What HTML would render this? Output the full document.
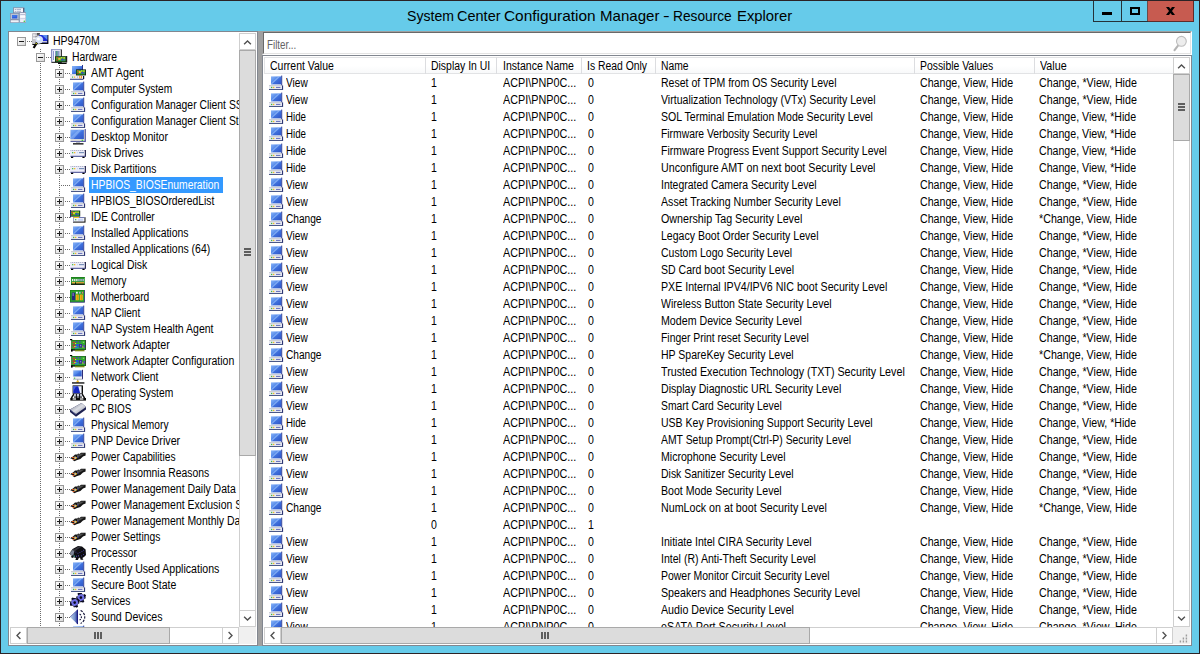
<!DOCTYPE html>
<html><head><meta charset="utf-8"><title>Resource Explorer</title>
<style>
*{box-sizing:border-box;margin:0;padding:0}
html,body{width:1200px;height:654px;overflow:hidden}
body{font-family:"Liberation Sans",sans-serif;font-size:12px;color:#000;background:#66cbea;position:relative}
.a{position:absolute}
#win{position:absolute;left:0;top:0;width:1200px;height:654px;background:#66cbea;overflow:hidden}
#title{position:absolute;left:0;top:6px;width:1200px;height:20px;font-size:15px;color:#000;line-height:20px;white-space:nowrap}
.tw{position:absolute;top:0;transform-origin:0 50%;display:block}
#tree{position:absolute;left:8px;top:31px;width:250px;height:615px;background:#fff;border:1px solid #828790;overflow:hidden}
#treein{position:absolute;left:1px;top:1px;width:229px;height:594px;overflow:hidden;background:#fff}
.bx{position:absolute;width:9px;height:9px;border:1px solid #989898;background:linear-gradient(135deg,#fcfcfc 10%,#d8d8d8)}
.bx:before{content:"";position:absolute;left:1px;top:3px;width:5px;height:1px;background:#1a1a1a}
.bx.p:after{content:"";position:absolute;left:3px;top:1px;width:1px;height:5px;background:#1a1a1a}
.hd{position:absolute;height:1px;background-image:linear-gradient(90deg,#6a6a6a 50%,transparent 50%);background-size:2px 1px}
.vd{position:absolute;width:1px;background-image:linear-gradient(#6a6a6a 50%,transparent 50%);background-size:1px 2px}
.ic{position:absolute;display:block}
.tx{position:absolute;padding:0 2px;height:16px;line-height:17px;white-space:nowrap}
.tx.sel{background:#3399ff;color:#fff}
.t{display:inline-block;transform-origin:0 50%;white-space:nowrap}
#split{position:absolute;left:258px;top:31px;width:4px;height:615px;background:#a0a0a0}
#filter{position:absolute;left:262px;top:31px;width:930px;height:24px;background:#fff;border:1px solid #a0a0a0;border-right-color:#fff;border-bottom-color:#fff}
#filter:before{content:"";position:absolute;left:0;top:0;right:0;bottom:0;border:1px solid #696969;border-right-color:#e3e3e3;border-bottom-color:#e3e3e3}
#list{position:absolute;left:262px;top:55px;width:930px;height:591px;background:#fff;border:1px solid #828790;overflow:hidden}
#listin{position:absolute;left:1px;top:1px;width:909px;height:570px;overflow:hidden}
#hdr{height:17px;position:relative;border:1px solid #e2e3e5;border-right:none;background:linear-gradient(#fff,#fff 50%,#f8f9fa)}
.h{position:absolute;top:-1px;height:17px;line-height:18px;padding-left:5px;border-left:1px solid #dcdde0;white-space:nowrap}
.r{height:17px;position:relative}
.c{position:absolute;top:0;height:17px;line-height:19px;white-space:nowrap;overflow:hidden}
.c1{left:-1px;width:161px}.c2{left:160px;width:71px}.c3{left:231px;width:85px}.c4{left:316px;width:74px}.c5{left:390px;width:259px}.c6{left:649px;width:120px}.c7{left:769px;width:140px}
.h.c1{border-left:none;padding-left:6px}.h.c3{padding-left:6px}
.c.c1{left:4px;padding-left:18px}
.c.c1 .ic{position:absolute;left:0;top:.5px}
.c.c2{padding-left:7px}.c.c3{padding-left:8px}.c.c4{padding-left:8px}.c.c5{padding-left:6.5px}.c.c6{padding-left:7px}.c.c7{padding-left:6px}
.sb{position:absolute;background:#fff;border:1px solid #cfcfcf}
.sbtn{position:absolute;width:17px;height:17px;background:#fff;border:1px solid #cfcfcf}
.sbtn svg,.thumb svg{display:block}
.thumb{position:absolute;background:#dcdcdc;border:1px solid #a9a9a9}
.gb{position:absolute;background:#5e5e5e}
</style></head><body>
<svg width="0" height="0" style="position:absolute">
<defs>
<linearGradient id="gmon" x1="0" y1="0" x2="1" y2="1"><stop offset="0" stop-color="#6fa0f0"/><stop offset=".5" stop-color="#3f74e0"/><stop offset="1" stop-color="#2a55c0"/></linearGradient>
<g id="pc">
<rect x="13.200" y=".6" width="1" height="9.800" fill="#27348b"/>
<rect x="3" y="1.400" width="10.300" height="8" fill="url(#gscr)"/>
<path d="M3 8.400L10.500 1.400h1.600L3.600 9.400H3z" fill="#b8d4fc" opacity=".5"/>
<rect x="1" y="10" width="13" height=".8" fill="#a0a4b0"/><path d="M1.500 10.400h12" stroke="#e8e8f0" stroke-width=".8" stroke-dasharray="1 1"/>
<rect x="1" y="10.800" width="13.400" height="3.400" fill="#e6e8f0"/>
<rect x="3" y="11.800" width="1.300" height="1.300" fill="#48b848"/><rect x="5" y="11.800" width="1.300" height="1.300" fill="#f4b820"/>
<rect x="8" y="11.900" width="4.400" height="1.100" fill="#7078c0"/>
<rect x="14" y="10.400" width="1.100" height="4.600" fill="#2c3474"/><rect x="1" y="14" width="13.600" height="1" fill="#4a5888"/>
</g>
<g id="i-pc"><use href="#pc"/></g>
<linearGradient id="gscr" x1="0" y1="0" x2="1" y2="1"><stop offset="0" stop-color="#8ab4f6"/><stop offset=".45" stop-color="#4f86ea"/><stop offset=".55" stop-color="#3e6fdc"/><stop offset="1" stop-color="#2f55c4"/></linearGradient>
<linearGradient id="gchip" x1="0" y1="0" x2="1" y2="1"><stop offset="0" stop-color="#6c7088"/><stop offset=".5" stop-color="#dcdee4"/><stop offset="1" stop-color="#888ca0"/></linearGradient>
<linearGradient id="gspk" x1="0" y1="0" x2="1" y2="0"><stop offset="0" stop-color="#c4d6e8"/><stop offset=".55" stop-color="#7c98d0"/><stop offset="1" stop-color="#2c3698"/></linearGradient>
<g id="pcb"><!-- 10x6 pcb -->
<rect x="0" y="0" width="10" height="6" fill="#0c1a0c"/><rect x=".6" y=".6" width="8.600" height="4.600" fill="#2fae2f"/>
<rect x="1.200" y="1" width="1.600" height="1.200" fill="#e83030"/><rect x="1.200" y="3.400" width="1.600" height="1.200" fill="#b82020"/>
<rect x="2.800" y="1.600" width="2" height="2" fill="#f4c030"/><rect x="5" y="1" width="1.400" height="1.200" fill="#f4d040"/>
<rect x="5.400" y="2.600" width="1.600" height="1.800" fill="#3a3ad0"/><rect x="7.200" y="1" width="1.400" height="1.400" fill="#e8c838"/><rect x="7.400" y="3" width="1.200" height="1.400" fill="#4848c8"/>
</g>
<g id="i-amt">
<rect x="12" y="0" width="1" height="10" fill="#27348b"/><rect x="2" y="1" width="10" height="8" fill="url(#gscr)"/>
<rect x="0" y="9.600" width="13" height=".8" fill="#a0a4b0"/><rect x="0" y="10.400" width="13.500" height="3.600" fill="#f0f1f6"/>
<rect x="2" y="11.500" width="1.200" height="1.200" fill="#48b848"/><rect x="4" y="11.500" width="1.200" height="1.200" fill="#f4b820"/><rect x="7" y="11.500" width="1" height="1.200" fill="#b0b4c8"/>
<rect x="9" y="10.800" width="3" height="2.600" fill="#f09020"/><rect x="9.600" y="11.200" width="1.400" height="1.600" fill="#fff4d0"/>
<rect x="13" y="11" width="1.200" height="3" fill="#101030"/><rect x="0" y="13.800" width="13.500" height="1" fill="#303a80"/>
<use href="#pcb" x="6" y="4.400"/>
</g>
<g id="i-mon">
<rect x=".5" y=".6" width="14.400" height="11.800" fill="#ece8dc"/><rect x="14.700" y="0" width="1" height="12.600" fill="#2a3088"/>
<rect x=".5" y=".8" width="13.400" height="9.300" fill="url(#gscr)"/><path d="M.5 8.500L8.500 .8h3L3.500 10.100H.5z" fill="#a8c8fa" opacity=".45"/>
<rect x=".5" y="11.900" width="15.200" height=".9" fill="#383e90"/><rect x="11.600" y="10.700" width="1.600" height="1.200" fill="#30d030"/>
<rect x="6" y="12.900" width="4" height="1.200" fill="#b8bcc8"/><rect x="3" y="14.200" width="10.500" height="1.300" fill="#0a0a0a"/>
</g>
<g id="i-disk">
<rect x="0" y="5" width="15.800" height="6.800" fill="#eeeefa"/><rect x=".5" y="5" width="15" height=".9" fill="#a8acc4"/>
<path d="M1 5.450h14" stroke="#e4e4f0" stroke-width=".9" stroke-dasharray="1 1"/>
<rect x="2" y="7" width="1.300" height="1.300" fill="#50c050"/><rect x="4" y="7" width="1.300" height="1.300" fill="#f8b828"/><rect x="7" y="7" width="1" height="1.200" fill="#c8d8f0"/>
<rect x="9" y="7" width="5" height="1.200" fill="#7890b8"/><rect x="14.800" y="5" width="1.100" height="6.800" fill="#181840"/>
<rect x=".5" y="10.800" width="15" height="1" fill="#404890"/><rect x="1" y="11.800" width="2.200" height="1.200" fill="#000"/><rect x="12.400" y="11.800" width="2.200" height="1.200" fill="#000"/>
</g>
<g id="i-ide">
<use href="#pcb" x=".2" y="1.600"/><rect x="0" y="1" width="1" height="7.500" fill="#202878"/>
<rect x="3" y="8.200" width="12.500" height="5.400" fill="#0a0a0a"/><rect x="3" y="8.200" width="11.500" height="4.400" fill="#eef0fa"/>
<rect x="3" y="8" width="6" height="1" fill="#f8c820"/><rect x="9" y="8" width="5.500" height="1" fill="#7078b0"/><rect x="3" y="8.200" width=".8" height="4.400" fill="#9098b8"/>
<rect x="5" y="10" width="1.300" height="1.300" fill="#58c058"/><rect x="8" y="9.800" width="5" height="2" fill="#c8d4f4"/>
</g>
<g id="i-mem">
<rect x="1" y="4" width="13.800" height="7.700" fill="#2c9a2c"/><rect x="1" y="4" width="13.800" height=".8" fill="#1c7a1c"/>
<g fill="#f0ecfa"><rect x="2" y="6" width="1.300" height="2.200"/><rect x="4.100" y="6" width="1.300" height="2.200"/><rect x="6.200" y="6" width="1.300" height="2.200"/></g>
<g fill="#b8b0f0"><rect x="8.300" y="6" width="1.300" height="2.200"/><rect x="10.400" y="6" width="1.300" height="2.200"/><rect x="12.500" y="6" width="1.300" height="2.200"/></g>
<rect x="2" y="9" width="3" height="1.600" fill="#f0b040"/><rect x="6" y="9" width="8" height="1.600" fill="#d8a038"/>
<rect x="1" y="10.700" width="13.800" height="1.100" fill="#050505"/><rect x="5" y="9.800" width="1" height="1" fill="#050505"/>
</g>
<g id="i-mobo">
<rect x="0" y="1" width="14.800" height="12.600" fill="#182060"/><rect x="0" y="1" width="14" height="11.800" fill="#2ea62e"/>
<rect x="0" y="1" width="14" height=".7" fill="#1a7a1a"/><rect x="0" y="1" width=".7" height="11.800" fill="#1a7a1a"/>
<rect x="1.800" y="3.600" width="3.400" height="7.600" fill="#28287c"/><rect x="2.400" y="4" width="1.600" height="3" fill="#6868b0"/>
<rect x="5.800" y="5.600" width="3" height="5.600" fill="#f4b418"/><rect x="6.800" y="5.600" width="1" height="5.600" fill="#d89808"/>
<rect x="9.800" y="5.600" width="3" height="5.600" fill="#f4b418"/><rect x="10.800" y="5.600" width="1" height="5.600" fill="#d89808"/>
<rect x="6" y="2.800" width="1.800" height="1.800" fill="#f4f4ff"/><rect x="9" y="2.800" width="1.600" height="1.800" fill="#b0a8e8"/><rect x="12" y="2.800" width="1" height="1.800" fill="#f86878"/>
</g>
<g id="i-nic">
<rect x="1.300" y="3" width="14.600" height="10" fill="#143a14"/><rect x="1.600" y="3.400" width="13.400" height="9" fill="#30aa30"/>
<rect x="0" y="2" width="2.200" height="1.200" fill="#000"/><rect x="1" y="12.400" width="1.600" height="2.200" fill="#000"/><rect x="1" y="12.600" width="4" height="1" fill="#000"/>
<rect x="2.600" y="4.800" width="2.400" height="1.400" fill="#d83030"/><rect x="2.600" y="7.400" width="2.400" height="1.600" fill="#c02838"/><rect x="2.600" y="10" width="2.400" height="1" fill="#d84040"/>
<rect x="5" y="6" width="1.200" height="1" fill="#f4d030"/><rect x="4" y="9" width="3" height=".8" fill="#e8d040"/>
<rect x="6" y="4" width="1.600" height="1.600" fill="#5040b0"/><rect x="9" y="4" width="1.600" height="1.600" fill="#5040b0"/>
<rect x="5.800" y="7" width="2.800" height="2.600" fill="#2858e0"/><rect x="5" y="10.200" width="3.600" height="1.200" fill="#2878e8"/>
<rect x="9" y="7" width="3.200" height="3.600" fill="#3c2c98"/><rect x="10" y="8" width="1.200" height="1.400" fill="#7890c8"/>
<rect x="12.600" y="9" width=".9" height="2" fill="#f0d040"/><rect x="13.400" y="8" width="1.600" height="2.600" fill="#5848b0"/><rect x="12.800" y="4.600" width="1.400" height="1.400" fill="#88d060"/>
<rect x="5" y="13" width="9.500" height="1.300" fill="#7a8a18"/>
</g>
<g id="i-netc">
<rect x="2.800" y="1" width="10" height="7" fill="#e8e8f0"/><rect x="3.300" y="1.400" width="8.400" height="6" fill="url(#gscr)"/><rect x="12" y=".8" width="1" height="9.400" fill="#303078"/>
<rect x="3" y="8" width="9" height="2.200" fill="#f0f0f4"/><rect x="3" y="9.800" width="9.600" height=".7" fill="#9098a8"/><rect x="4" y="8.600" width="1.200" height="1.100" fill="#38b838"/>
<rect x="7.200" y="10.500" width="1" height="1.500" fill="#888"/><circle cx="7.700" cy="12.600" r="1.200" fill="#f8c020"/><rect x="2" y="13.300" width="12.400" height="1.300" fill="#050505"/>
</g>
<g id="i-os">
<rect x="2.600" y=".4" width="10.400" height="8.400" fill="#0a0a0a"/><rect x="3.200" y="1.200" width="8.400" height="7" fill="#f0f4ff"/><path d="M3.200 1.200h5l2 7h-7z" fill="#1828c0"/><path d="M3.200 1.200h3l-3 5z" fill="#4868e0"/>
<path d="M4 8.800L1.400 13.200M12 8.800L14.600 13.200" stroke="#0a0a0a" stroke-width="1.500"/><path d="M4.600 9h6.800l1.200 3H3.400z" fill="#c8ccd8"/><path d="M6.400 9v4M9.600 9v4" stroke="#0a0a0a" stroke-width="1"/><rect x="4" y="11.600" width="8" height="1" fill="#0a0a0a"/>
<rect x=".3" y="13" width="15.700" height="2.600" fill="#0a0a0a"/><rect x="2.600" y="13.400" width="3.400" height="1.200" fill="#fff"/><rect x="10" y="13.400" width="3.400" height="1.200" fill="#fff"/>
</g>
<g id="i-bios">
<path d="M0 8.500L11.500 2L16 6v2.600L6 15.800L0 11z" fill="#1c2050"/><path d="M0 8.500L11.500 2L16 6L6 13z" fill="url(#gchip)"/>
<path d="M.6 9l5.600 4.600" stroke="#6a70a0" stroke-width=".8"/>
</g>
<g id="i-pwr">
<path d="M1 8.600L3 7.400L5 5.600L7.500 5.400L8 4.600L9.600 5L11 3.800H15.600V6.400L13 7.600L10.400 10L6.500 11.200L4.600 12.200L2.600 11L3.400 10.200L.4 9.600z" fill="#141414"/>
<path d="M7 6L11 4.400h3.600l-4 2.600L7 8.600z" fill="#4a4a4a"/>
<rect x="2" y="8" width="2" height="1" fill="#e05818"/><rect x="2.600" y="10" width="2" height="1" fill="#e05818"/><rect x="4.400" y="7.600" width="1.400" height="2.600" fill="#fff0c0"/><rect x="5.800" y="8" width="1" height="1.600" fill="#f0c020"/>
<rect x="7" y="7.400" width="1.600" height="1.400" fill="#4a4a88"/>
</g>
<g id="i-cpu">
<path d="M.4 7L2.600 4L8 1L12 1.600L15.600 4.600L16 10L14.600 11.600L12.400 13L13.400 14.800H10.600L10 12.600L8.600 13.200L8 15H5.400L6 13L3.600 12.200L2.600 13L.8 12L2 10.600L.4 10z" fill="#0e0e12"/>
<path d="M.6 7.200L3 4.600L4.600 5L3.400 10.400L.8 10z" fill="#7c8498"/><path d="M2.600 5.400L8 1.800L11 2L5 6z" fill="#34343c"/>
<g fill="#4a44a8" opacity=".8"><rect x="5.400" y="6.600" width="1" height="1"/><rect x="7.400" y="7.800" width="1" height="1"/><rect x="9.400" y="7" width="1" height="1"/><rect x="11.400" y="6" width="1" height="1"/><rect x="13" y="4.800" width="1" height="1"/><rect x="13" y="9" width="1" height="1"/><rect x="6" y="10.600" width="1" height="1.600"/><rect x="8" y="10" width="1" height="1.600"/><rect x="11" y="10.400" width="1" height="1"/></g>
<rect x="3.600" y="10.400" width="1.200" height="1.600" fill="#3a9a98"/>
</g>
<g id="gear"><path d="M-1-4.600h2l.4 1.300 1.200.5 1.200-.7 1.400 1.400-.7 1.200.5 1.200L4.600-1v2l-1.300.4-.5 1.200.7 1.200-1.400 1.400-1.200-.7-1.200.5L1 4.600h-2l-.4-1.300-1.200-.5-1.200.7-1.400-1.400.7-1.200-.5-1.200L-4.600 1v-2l1.300-.4.500-1.200-.7-1.200 1.400-1.400 1.200.7 1.200-.5z" fill="#0a0a20"/><circle r="3.300" fill="#6e6ee6"/><circle r="3.300" fill="none" stroke="#9c9cf4" stroke-width=".6" stroke-dasharray="2 3"/><circle r="1.300" fill="#08081c"/></g>
<g id="i-svc"><use href="#gear" x="10.900" y="4.600"/><use href="#gear" x="4.700" y="9.600"/></g>
<g id="i-snd">
<path d="M0 8L8 .4V15.600z" fill="url(#gspk)"/><path d="M7.400 1V15" stroke="#1c1c80" stroke-width="1.200"/><path d="M0 8L8 .4" stroke="#3a3a9a" stroke-width=".6"/>
<path d="M9.600 5A3.400 3.400 0 0 1 9.600 11" fill="none" stroke="#0a0a30" stroke-width="1.100" stroke-dasharray="1.800 1"/>
<path d="M10.600 1.600A7 7 0 0 1 10.600 14.400" fill="none" stroke="#0a0a30" stroke-width="1.100" stroke-dasharray="2.400 1.200"/>
</g>
<g id="i-root">
<rect x=".4" y=".4" width="7" height="11" fill="#8c8c94"/><rect x=".4" y=".4" width="3" height="11" fill="#c4c4cc"/><rect x="1" y="1.600" width="4" height="1" fill="#fff"/><rect x="1" y="4.600" width="3" height="1.200" fill="#fff"/><rect x="5" y=".4" width="3" height="1" fill="#0a0a0a"/>
<rect x="7" y="2" width="9.400" height="9" fill="#0a0a0a"/><rect x="7" y="2" width="8.400" height="7.600" fill="#1c2cd8"/><path d="M10 2h5.400v5z" fill="#5c8cf0"/><rect x="9" y="8" width="6" height="1.400" fill="#c8c8d4"/>
<circle cx="7.200" cy="6.800" r="3.500" fill="#cfe0fa" stroke="#e8ecf4" stroke-width=".8"/><circle cx="6.400" cy="6" r="1.600" fill="#fff"/>
<path d="M5 9.600L1.600 15" stroke="#0a0a0a" stroke-width="2.200"/><rect x="3.600" y="10" width="1.200" height="1.200" fill="#d8d818"/>
<rect x=".4" y="11" width="4" height="1" fill="#0a0a0a"/>
</g>
<g id="i-hw">
<rect x=".4" y=".4" width="10.400" height="13.400" fill="#0a0a0a"/><rect x=".4" y=".4" width="9.400" height="12.400" fill="#fafaff"/><rect x=".4" y=".4" width="9.400" height=".8" fill="#8890d0"/><rect x=".4" y=".4" width=".8" height="12.400" fill="#6870c8"/>
<rect x="2" y="2" width=".9" height="9" fill="#8088d0"/><rect x="4" y="2" width="4.600" height="5" fill="#8898c8"/><rect x="5" y="2" width="1.400" height="5" fill="#50a088"/>
<g transform="translate(4 7.200) scale(1.160 1)"><use href="#pcb"/></g>
<rect x="15.200" y="7" width="1" height="6.400" fill="#0a0a0a"/><rect x="7" y="13.600" width="8.600" height="1.400" fill="#0a0a0a"/>
</g>
</defs></svg>
<div id="win">
<div id="title"><span class="tw" style="left:406.75px;transform:scaleX(0.9398)">System</span><span class="tw" style="left:457.23px;transform:scaleX(0.9670)">Center</span><span class="tw" style="left:504.18px;transform:scaleX(1.0270)">Configuration</span><span class="tw" style="left:599.90px;transform:scaleX(1.0034)">Manager</span><span class="tw" style="left:663.24px;transform:scaleX(1.3235)">-</span><span class="tw" style="left:673.27px;transform:scaleX(0.9153)">Resource</span><span class="tw" style="left:736.91px;transform:scaleX(0.9878)">Explorer</span></div>
<svg class="a" style="left:10px;top:7px" width="16" height="16" viewBox="0 0 16 16"><rect x="3.500" y=".800" width="10.400" height="5" fill="#f6f7fb" stroke="#7c86a4" stroke-width=".8"/><rect x="13.300" y="1" width=".9" height="5" fill="#39446c"/><path d="M6.500 2.400h4.500M6.500 4.300h4.500" stroke="#9ca6c4" stroke-width=".9"/><rect x="4.800" y="2" width=".9" height=".9" fill="#7c86a4"/><rect x="4.800" y="3.900" width=".9" height=".9" fill="#7c86a4"/>
<rect x=".5" y="6.400" width="8.400" height="9.200" fill="#bcc3d2" stroke="#8690ac" stroke-width=".7"/><rect x="2" y="8" width="5.300" height="3.500" fill="#2f5fe0"/><path d="M2 8h5.300v1.200L2 10.600z" fill="#4f86ee" opacity=".6"/><rect x=".8" y="12.400" width="7.800" height=".8" fill="#6c7490"/><rect x=".8" y="13.400" width="7.800" height="1.800" fill="#f0f2f8"/>
<rect x="9.700" y="5.600" width="6.200" height="10" fill="#eef0f9" stroke="#8890ac" stroke-width=".7"/><rect x="10.200" y="7" width="5.200" height="1" fill="#b8bdd2"/><rect x="10.200" y="9.300" width="5.200" height="1" fill="#fff"/><rect x="10.200" y="11.200" width="5.200" height="1" fill="#c6cbe0"/><circle cx="14.300" cy="14.300" r=".8" fill="#35d035"/></svg>
<!-- caption buttons -->
<div class="a" style="left:1093px;top:1px;width:101px;height:21px;border:1px solid #253238;border-top:none;background:#66cbea"></div>
<div class="a" style="left:1121px;top:1px;width:1px;height:20px;background:#253238"></div>
<div class="a" style="left:1148px;top:1px;width:46px;height:21px;background:#c75b50;border-right:1px solid #5e2c2a;border-bottom:1px solid #5e2c2a"></div>
<div class="a" style="left:1147px;top:1px;width:1px;height:20px;background:#6a4a48"></div>
<svg class="a" style="left:1093px;top:0" width="101" height="22"><rect x="9" y="12" width="10" height="3" fill="#000"/><rect x="38" y="8" width="8" height="6" fill="none" stroke="#000" stroke-width="2"/><path d="M73 7h3l6 8h-3zM79 7h3l-6 8h-3z" fill="#000"/></svg>

<div id="tree"><div id="treein">
<span class="vd" style="left:30px;top:16px;height:3px"></span>
<span class="vd" style="left:30px;top:30px;height:570px"></span>
<span class="vd" style="left:49px;top:32px;height:570px"></span>
<span class="bx m" style="left:7px;top:4px"></span><span class="hd" style="left:17px;top:8px;width:5px"></span><svg class="ic" style="left:22px;top:0px" width="18" height="16" viewBox="0 0 18 16"><use href="#i-root"/></svg><span class="tx" style="left:40.5px;top:0px"><span class="t" style="transform:scaleX(0.8749)">HP9470M</span></span>
<span class="bx m" style="left:26px;top:20px"></span><span class="hd" style="left:36px;top:24px;width:5px"></span><svg class="ic" style="left:41px;top:16px" width="18" height="16" viewBox="0 0 18 16"><use href="#i-hw"/></svg><span class="tx" style="left:59.5px;top:16px"><span class="t" style="transform:scaleX(0.8649)">Hardware</span></span>
<span class="bx p" style="left:45px;top:36px"></span><span class="hd" style="left:55px;top:40px;width:5px"></span><svg class="ic" style="left:60px;top:32px" width="18" height="16" viewBox="0 0 18 16"><use href="#i-amt"/></svg><span class="tx" style="left:78.5px;top:32px"><span class="t" style="transform:scaleX(0.8926)">AMT Agent</span></span>
<span class="bx p" style="left:45px;top:52px"></span><span class="hd" style="left:55px;top:56px;width:5px"></span><svg class="ic" style="left:60px;top:48px" width="18" height="16" viewBox="0 0 18 16"><use href="#i-pc"/></svg><span class="tx" style="left:78.5px;top:48px"><span class="t" style="transform:scaleX(0.8456)">Computer System</span></span>
<span class="bx p" style="left:45px;top:68px"></span><span class="hd" style="left:55px;top:72px;width:5px"></span><svg class="ic" style="left:60px;top:64px" width="18" height="16" viewBox="0 0 18 16"><use href="#i-pc"/></svg><span class="tx" style="left:78.5px;top:64px"><span class="t" style="transform:scaleX(0.8649)">Configuration Manager Client SS</span></span>
<span class="bx p" style="left:45px;top:84px"></span><span class="hd" style="left:55px;top:88px;width:5px"></span><svg class="ic" style="left:60px;top:80px" width="18" height="16" viewBox="0 0 18 16"><use href="#i-pc"/></svg><span class="tx" style="left:78.5px;top:80px"><span class="t" style="transform:scaleX(0.8649)">Configuration Manager Client St</span></span>
<span class="bx p" style="left:45px;top:100px"></span><span class="hd" style="left:55px;top:104px;width:5px"></span><svg class="ic" style="left:60px;top:96px" width="18" height="16" viewBox="0 0 18 16"><use href="#i-mon"/></svg><span class="tx" style="left:78.5px;top:96px"><span class="t" style="transform:scaleX(0.8813)">Desktop Monitor</span></span>
<span class="bx p" style="left:45px;top:116px"></span><span class="hd" style="left:55px;top:120px;width:5px"></span><svg class="ic" style="left:60px;top:112px" width="18" height="16" viewBox="0 0 18 16"><use href="#i-disk"/></svg><span class="tx" style="left:78.5px;top:112px"><span class="t" style="transform:scaleX(0.8653)">Disk Drives</span></span>
<span class="bx p" style="left:45px;top:132px"></span><span class="hd" style="left:55px;top:136px;width:5px"></span><svg class="ic" style="left:60px;top:128px" width="18" height="16" viewBox="0 0 18 16"><use href="#i-disk"/></svg><span class="tx" style="left:78.5px;top:128px"><span class="t" style="transform:scaleX(0.8515)">Disk Partitions</span></span>
<span class="hd" style="left:51px;top:152px;width:9px"></span><svg class="ic" style="left:60px;top:144px" width="18" height="16" viewBox="0 0 18 16"><use href="#i-pc"/></svg><span class="tx sel" style="left:78.5px;top:144px;width:134px"><span class="t" style="transform:scaleX(0.8626)">HPBIOS_BIOSEnumeration</span></span>
<span class="bx p" style="left:45px;top:164px"></span><span class="hd" style="left:55px;top:168px;width:5px"></span><svg class="ic" style="left:60px;top:160px" width="18" height="16" viewBox="0 0 18 16"><use href="#i-pc"/></svg><span class="tx" style="left:78.5px;top:160px"><span class="t" style="transform:scaleX(0.8599)">HPBIOS_BIOSOrderedList</span></span>
<span class="bx p" style="left:45px;top:180px"></span><span class="hd" style="left:55px;top:184px;width:5px"></span><svg class="ic" style="left:60px;top:176px" width="18" height="16" viewBox="0 0 18 16"><use href="#i-ide"/></svg><span class="tx" style="left:78.5px;top:176px"><span class="t" style="transform:scaleX(0.8453)">IDE Controller</span></span>
<span class="bx p" style="left:45px;top:196px"></span><span class="hd" style="left:55px;top:200px;width:5px"></span><svg class="ic" style="left:60px;top:192px" width="18" height="16" viewBox="0 0 18 16"><use href="#i-pc"/></svg><span class="tx" style="left:78.5px;top:192px"><span class="t" style="transform:scaleX(0.8699)">Installed Applications</span></span>
<span class="bx p" style="left:45px;top:212px"></span><span class="hd" style="left:55px;top:216px;width:5px"></span><svg class="ic" style="left:60px;top:208px" width="18" height="16" viewBox="0 0 18 16"><use href="#i-pc"/></svg><span class="tx" style="left:78.5px;top:208px"><span class="t" style="transform:scaleX(0.8717)">Installed Applications (64)</span></span>
<span class="bx p" style="left:45px;top:228px"></span><span class="hd" style="left:55px;top:232px;width:5px"></span><svg class="ic" style="left:60px;top:224px" width="18" height="16" viewBox="0 0 18 16"><use href="#i-disk"/></svg><span class="tx" style="left:78.5px;top:224px"><span class="t" style="transform:scaleX(0.8701)">Logical Disk</span></span>
<span class="bx p" style="left:45px;top:244px"></span><span class="hd" style="left:55px;top:248px;width:5px"></span><svg class="ic" style="left:60px;top:240px" width="18" height="16" viewBox="0 0 18 16"><use href="#i-mem"/></svg><span class="tx" style="left:78.5px;top:240px"><span class="t" style="transform:scaleX(0.8144)">Memory</span></span>
<span class="bx p" style="left:45px;top:260px"></span><span class="hd" style="left:55px;top:264px;width:5px"></span><svg class="ic" style="left:60px;top:256px" width="18" height="16" viewBox="0 0 18 16"><use href="#i-mobo"/></svg><span class="tx" style="left:78.5px;top:256px"><span class="t" style="transform:scaleX(0.8568)">Motherboard</span></span>
<span class="bx p" style="left:45px;top:276px"></span><span class="hd" style="left:55px;top:280px;width:5px"></span><svg class="ic" style="left:60px;top:272px" width="18" height="16" viewBox="0 0 18 16"><use href="#i-pc"/></svg><span class="tx" style="left:78.5px;top:272px"><span class="t" style="transform:scaleX(0.8413)">NAP Client</span></span>
<span class="bx p" style="left:45px;top:292px"></span><span class="hd" style="left:55px;top:296px;width:5px"></span><svg class="ic" style="left:60px;top:288px" width="18" height="16" viewBox="0 0 18 16"><use href="#i-pc"/></svg><span class="tx" style="left:78.5px;top:288px"><span class="t" style="transform:scaleX(0.8759)">NAP System Health Agent</span></span>
<span class="bx p" style="left:45px;top:308px"></span><span class="hd" style="left:55px;top:312px;width:5px"></span><svg class="ic" style="left:60px;top:304px" width="18" height="16" viewBox="0 0 18 16"><use href="#i-nic"/></svg><span class="tx" style="left:78.5px;top:304px"><span class="t" style="transform:scaleX(0.8871)">Network Adapter</span></span>
<span class="bx p" style="left:45px;top:324px"></span><span class="hd" style="left:55px;top:328px;width:5px"></span><svg class="ic" style="left:60px;top:320px" width="18" height="16" viewBox="0 0 18 16"><use href="#i-nic"/></svg><span class="tx" style="left:78.5px;top:320px"><span class="t" style="transform:scaleX(0.8768)">Network Adapter Configuration</span></span>
<span class="bx p" style="left:45px;top:340px"></span><span class="hd" style="left:55px;top:344px;width:5px"></span><svg class="ic" style="left:60px;top:336px" width="18" height="16" viewBox="0 0 18 16"><use href="#i-netc"/></svg><span class="tx" style="left:78.5px;top:336px"><span class="t" style="transform:scaleX(0.8650)">Network Client</span></span>
<span class="bx p" style="left:45px;top:356px"></span><span class="hd" style="left:55px;top:360px;width:5px"></span><svg class="ic" style="left:60px;top:352px" width="18" height="16" viewBox="0 0 18 16"><use href="#i-os"/></svg><span class="tx" style="left:78.5px;top:352px"><span class="t" style="transform:scaleX(0.8558)">Operating System</span></span>
<span class="bx p" style="left:45px;top:372px"></span><span class="hd" style="left:55px;top:376px;width:5px"></span><svg class="ic" style="left:60px;top:368px" width="18" height="16" viewBox="0 0 18 16"><use href="#i-bios"/></svg><span class="tx" style="left:78.5px;top:368px"><span class="t" style="transform:scaleX(0.8277)">PC BIOS</span></span>
<span class="bx p" style="left:45px;top:388px"></span><span class="hd" style="left:55px;top:392px;width:5px"></span><svg class="ic" style="left:60px;top:384px" width="18" height="16" viewBox="0 0 18 16"><use href="#i-pc"/></svg><span class="tx" style="left:78.5px;top:384px"><span class="t" style="transform:scaleX(0.8483)">Physical Memory</span></span>
<span class="bx p" style="left:45px;top:404px"></span><span class="hd" style="left:55px;top:408px;width:5px"></span><svg class="ic" style="left:60px;top:400px" width="18" height="16" viewBox="0 0 18 16"><use href="#i-pc"/></svg><span class="tx" style="left:78.5px;top:400px"><span class="t" style="transform:scaleX(0.8937)">PNP Device Driver</span></span>
<span class="bx p" style="left:45px;top:420px"></span><span class="hd" style="left:55px;top:424px;width:5px"></span><svg class="ic" style="left:60px;top:416px" width="18" height="16" viewBox="0 0 18 16"><use href="#i-pwr"/></svg><span class="tx" style="left:78.5px;top:416px"><span class="t" style="transform:scaleX(0.8502)">Power Capabilities</span></span>
<span class="bx p" style="left:45px;top:436px"></span><span class="hd" style="left:55px;top:440px;width:5px"></span><svg class="ic" style="left:60px;top:432px" width="18" height="16" viewBox="0 0 18 16"><use href="#i-pwr"/></svg><span class="tx" style="left:78.5px;top:432px"><span class="t" style="transform:scaleX(0.8652)">Power Insomnia Reasons</span></span>
<span class="bx p" style="left:45px;top:452px"></span><span class="hd" style="left:55px;top:456px;width:5px"></span><svg class="ic" style="left:60px;top:448px" width="18" height="16" viewBox="0 0 18 16"><use href="#i-pwr"/></svg><span class="tx" style="left:78.5px;top:448px"><span class="t" style="transform:scaleX(0.8713)">Power Management Daily Data</span></span>
<span class="bx p" style="left:45px;top:468px"></span><span class="hd" style="left:55px;top:472px;width:5px"></span><svg class="ic" style="left:60px;top:464px" width="18" height="16" viewBox="0 0 18 16"><use href="#i-pwr"/></svg><span class="tx" style="left:78.5px;top:464px"><span class="t" style="transform:scaleX(0.8717)">Power Management Exclusion S</span></span>
<span class="bx p" style="left:45px;top:484px"></span><span class="hd" style="left:55px;top:488px;width:5px"></span><svg class="ic" style="left:60px;top:480px" width="18" height="16" viewBox="0 0 18 16"><use href="#i-pwr"/></svg><span class="tx" style="left:78.5px;top:480px"><span class="t" style="transform:scaleX(0.8707)">Power Management Monthly Da</span></span>
<span class="bx p" style="left:45px;top:500px"></span><span class="hd" style="left:55px;top:504px;width:5px"></span><svg class="ic" style="left:60px;top:496px" width="18" height="16" viewBox="0 0 18 16"><use href="#i-pwr"/></svg><span class="tx" style="left:78.5px;top:496px"><span class="t" style="transform:scaleX(0.8598)">Power Settings</span></span>
<span class="bx p" style="left:45px;top:516px"></span><span class="hd" style="left:55px;top:520px;width:5px"></span><svg class="ic" style="left:60px;top:512px" width="18" height="16" viewBox="0 0 18 16"><use href="#i-cpu"/></svg><span class="tx" style="left:78.5px;top:512px"><span class="t" style="transform:scaleX(0.8495)">Processor</span></span>
<span class="bx p" style="left:45px;top:532px"></span><span class="hd" style="left:55px;top:536px;width:5px"></span><svg class="ic" style="left:60px;top:528px" width="18" height="16" viewBox="0 0 18 16"><use href="#i-pc"/></svg><span class="tx" style="left:78.5px;top:528px"><span class="t" style="transform:scaleX(0.8829)">Recently Used Applications</span></span>
<span class="bx p" style="left:45px;top:548px"></span><span class="hd" style="left:55px;top:552px;width:5px"></span><svg class="ic" style="left:60px;top:544px" width="18" height="16" viewBox="0 0 18 16"><use href="#i-pc"/></svg><span class="tx" style="left:78.5px;top:544px"><span class="t" style="transform:scaleX(0.8757)">Secure Boot State</span></span>
<span class="bx p" style="left:45px;top:564px"></span><span class="hd" style="left:55px;top:568px;width:5px"></span><svg class="ic" style="left:60px;top:560px" width="18" height="16" viewBox="0 0 18 16"><use href="#i-svc"/></svg><span class="tx" style="left:78.5px;top:560px"><span class="t" style="transform:scaleX(0.8562)">Services</span></span>
<span class="bx p" style="left:45px;top:580px"></span><span class="hd" style="left:55px;top:584px;width:5px"></span><svg class="ic" style="left:60px;top:576px" width="18" height="16" viewBox="0 0 18 16"><use href="#i-snd"/></svg><span class="tx" style="left:78.5px;top:576px"><span class="t" style="transform:scaleX(0.8870)">Sound Devices</span></span>
<span class="bx p" style="left:45px;top:596px"></span><span class="hd" style="left:55px;top:600px;width:5px"></span><svg class="ic" style="left:60px;top:592px" width="18" height="16" viewBox="0 0 18 16"><use href="#i-pc"/></svg><span class="tx" style="left:78.5px;top:592px"><span class="t" style="transform:scaleX(0.8800)">System</span></span>
</div>
</div>
<div id="split"></div>
<div id="filter"><span style="position:absolute;left:4.300px;top:6px;color:#636363;line-height:14px"><span class="t" style="transform:scaleX(0.8135)">Filter...</span></span>
<svg style="position:absolute;left:903px;top:0" width="24" height="22" viewBox="0 0 24 22"><circle cx="15.400" cy="9.300" r="4.900" fill="#ededed" stroke="#bdbdbd" stroke-width="1.100"/><path d="M12.200 13.300L8 18.800" stroke="#b4b4b4" stroke-width="2.100" fill="none"/></svg></div>

<div id="list"><div id="listin">
<div id="hdr"><span class="h c1"><span class="t" style="transform:scaleX(0.8721)">Current Value</span></span><span class="h c2"><span class="t" style="transform:scaleX(0.8702)">Display In UI</span></span><span class="h c3"><span class="t" style="transform:scaleX(0.8784)">Instance Name</span></span><span class="h c4"><span class="t" style="transform:scaleX(0.8649)">Is Read Only</span></span><span class="h c5"><span class="t" style="transform:scaleX(0.8590)">Name</span></span><span class="h c6"><span class="t" style="transform:scaleX(0.8663)">Possible Values</span></span><span class="h c7"><span class="t" style="transform:scaleX(0.8956)">Value</span></span></div>
<div class="r"><span class="c c1"><svg class="ic" width="16" height="16" viewBox="0 0 16 16"><use href="#pc"/></svg><span class="t" style="transform:scaleX(0.8412)">View</span></span><span class="c c2"><span class="t" style="transform:scaleX(0.8800)">1</span></span><span class="c c3"><span class="t" style="transform:scaleX(0.8997)">ACPI\PNP0C...</span></span><span class="c c4"><span class="t" style="transform:scaleX(0.8800)">0</span></span><span class="c c5"><span class="t" style="transform:scaleX(0.8781)">Reset of TPM from OS Security Level</span></span><span class="c c6"><span class="t" style="transform:scaleX(0.8860)">Change, View, Hide</span></span><span class="c c7"><span class="t" style="transform:scaleX(0.8911)">Change, *View, Hide</span></span></div>
<div class="r"><span class="c c1"><svg class="ic" width="16" height="16" viewBox="0 0 16 16"><use href="#pc"/></svg><span class="t" style="transform:scaleX(0.8412)">View</span></span><span class="c c2"><span class="t" style="transform:scaleX(0.8800)">1</span></span><span class="c c3"><span class="t" style="transform:scaleX(0.8997)">ACPI\PNP0C...</span></span><span class="c c4"><span class="t" style="transform:scaleX(0.8800)">0</span></span><span class="c c5"><span class="t" style="transform:scaleX(0.8802)">Virtualization Technology (VTx) Security Level</span></span><span class="c c6"><span class="t" style="transform:scaleX(0.8860)">Change, View, Hide</span></span><span class="c c7"><span class="t" style="transform:scaleX(0.8911)">Change, *View, Hide</span></span></div>
<div class="r"><span class="c c1"><svg class="ic" width="16" height="16" viewBox="0 0 16 16"><use href="#pc"/></svg><span class="t" style="transform:scaleX(0.8101)">Hide</span></span><span class="c c2"><span class="t" style="transform:scaleX(0.8800)">1</span></span><span class="c c3"><span class="t" style="transform:scaleX(0.8997)">ACPI\PNP0C...</span></span><span class="c c4"><span class="t" style="transform:scaleX(0.8800)">0</span></span><span class="c c5"><span class="t" style="transform:scaleX(0.8801)">SOL Terminal Emulation Mode Security Level</span></span><span class="c c6"><span class="t" style="transform:scaleX(0.8860)">Change, View, Hide</span></span><span class="c c7"><span class="t" style="transform:scaleX(0.8839)">Change, View, *Hide</span></span></div>
<div class="r"><span class="c c1"><svg class="ic" width="16" height="16" viewBox="0 0 16 16"><use href="#pc"/></svg><span class="t" style="transform:scaleX(0.8101)">Hide</span></span><span class="c c2"><span class="t" style="transform:scaleX(0.8800)">1</span></span><span class="c c3"><span class="t" style="transform:scaleX(0.8997)">ACPI\PNP0C...</span></span><span class="c c4"><span class="t" style="transform:scaleX(0.8800)">0</span></span><span class="c c5"><span class="t" style="transform:scaleX(0.8622)">Firmware Verbosity Security Level</span></span><span class="c c6"><span class="t" style="transform:scaleX(0.8860)">Change, View, Hide</span></span><span class="c c7"><span class="t" style="transform:scaleX(0.8839)">Change, View, *Hide</span></span></div>
<div class="r"><span class="c c1"><svg class="ic" width="16" height="16" viewBox="0 0 16 16"><use href="#pc"/></svg><span class="t" style="transform:scaleX(0.8101)">Hide</span></span><span class="c c2"><span class="t" style="transform:scaleX(0.8800)">1</span></span><span class="c c3"><span class="t" style="transform:scaleX(0.8997)">ACPI\PNP0C...</span></span><span class="c c4"><span class="t" style="transform:scaleX(0.8800)">0</span></span><span class="c c5"><span class="t" style="transform:scaleX(0.8703)">Firmware Progress Event Support Security Level</span></span><span class="c c6"><span class="t" style="transform:scaleX(0.8860)">Change, View, Hide</span></span><span class="c c7"><span class="t" style="transform:scaleX(0.8839)">Change, View, *Hide</span></span></div>
<div class="r"><span class="c c1"><svg class="ic" width="16" height="16" viewBox="0 0 16 16"><use href="#pc"/></svg><span class="t" style="transform:scaleX(0.8101)">Hide</span></span><span class="c c2"><span class="t" style="transform:scaleX(0.8800)">1</span></span><span class="c c3"><span class="t" style="transform:scaleX(0.8997)">ACPI\PNP0C...</span></span><span class="c c4"><span class="t" style="transform:scaleX(0.8800)">0</span></span><span class="c c5"><span class="t" style="transform:scaleX(0.8915)">Unconfigure AMT on next boot Security Level</span></span><span class="c c6"><span class="t" style="transform:scaleX(0.8860)">Change, View, Hide</span></span><span class="c c7"><span class="t" style="transform:scaleX(0.8839)">Change, View, *Hide</span></span></div>
<div class="r"><span class="c c1"><svg class="ic" width="16" height="16" viewBox="0 0 16 16"><use href="#pc"/></svg><span class="t" style="transform:scaleX(0.8412)">View</span></span><span class="c c2"><span class="t" style="transform:scaleX(0.8800)">1</span></span><span class="c c3"><span class="t" style="transform:scaleX(0.8997)">ACPI\PNP0C...</span></span><span class="c c4"><span class="t" style="transform:scaleX(0.8800)">0</span></span><span class="c c5"><span class="t" style="transform:scaleX(0.8704)">Integrated Camera Security Level</span></span><span class="c c6"><span class="t" style="transform:scaleX(0.8860)">Change, View, Hide</span></span><span class="c c7"><span class="t" style="transform:scaleX(0.8911)">Change, *View, Hide</span></span></div>
<div class="r"><span class="c c1"><svg class="ic" width="16" height="16" viewBox="0 0 16 16"><use href="#pc"/></svg><span class="t" style="transform:scaleX(0.8412)">View</span></span><span class="c c2"><span class="t" style="transform:scaleX(0.8800)">1</span></span><span class="c c3"><span class="t" style="transform:scaleX(0.8997)">ACPI\PNP0C...</span></span><span class="c c4"><span class="t" style="transform:scaleX(0.8800)">0</span></span><span class="c c5"><span class="t" style="transform:scaleX(0.8839)">Asset Tracking Number Security Level</span></span><span class="c c6"><span class="t" style="transform:scaleX(0.8860)">Change, View, Hide</span></span><span class="c c7"><span class="t" style="transform:scaleX(0.8911)">Change, *View, Hide</span></span></div>
<div class="r"><span class="c c1"><svg class="ic" width="16" height="16" viewBox="0 0 16 16"><use href="#pc"/></svg><span class="t" style="transform:scaleX(0.8443)">Change</span></span><span class="c c2"><span class="t" style="transform:scaleX(0.8800)">1</span></span><span class="c c3"><span class="t" style="transform:scaleX(0.8997)">ACPI\PNP0C...</span></span><span class="c c4"><span class="t" style="transform:scaleX(0.8800)">0</span></span><span class="c c5"><span class="t" style="transform:scaleX(0.8913)">Ownership Tag Security Level</span></span><span class="c c6"><span class="t" style="transform:scaleX(0.8860)">Change, View, Hide</span></span><span class="c c7"><span class="t" style="transform:scaleX(0.8920)">*Change, View, Hide</span></span></div>
<div class="r"><span class="c c1"><svg class="ic" width="16" height="16" viewBox="0 0 16 16"><use href="#pc"/></svg><span class="t" style="transform:scaleX(0.8412)">View</span></span><span class="c c2"><span class="t" style="transform:scaleX(0.8800)">1</span></span><span class="c c3"><span class="t" style="transform:scaleX(0.8997)">ACPI\PNP0C...</span></span><span class="c c4"><span class="t" style="transform:scaleX(0.8800)">0</span></span><span class="c c5"><span class="t" style="transform:scaleX(0.8777)">Legacy Boot Order Security Level</span></span><span class="c c6"><span class="t" style="transform:scaleX(0.8860)">Change, View, Hide</span></span><span class="c c7"><span class="t" style="transform:scaleX(0.8911)">Change, *View, Hide</span></span></div>
<div class="r"><span class="c c1"><svg class="ic" width="16" height="16" viewBox="0 0 16 16"><use href="#pc"/></svg><span class="t" style="transform:scaleX(0.8412)">View</span></span><span class="c c2"><span class="t" style="transform:scaleX(0.8800)">1</span></span><span class="c c3"><span class="t" style="transform:scaleX(0.8997)">ACPI\PNP0C...</span></span><span class="c c4"><span class="t" style="transform:scaleX(0.8800)">0</span></span><span class="c c5"><span class="t" style="transform:scaleX(0.8735)">Custom Logo Security Level</span></span><span class="c c6"><span class="t" style="transform:scaleX(0.8860)">Change, View, Hide</span></span><span class="c c7"><span class="t" style="transform:scaleX(0.8911)">Change, *View, Hide</span></span></div>
<div class="r"><span class="c c1"><svg class="ic" width="16" height="16" viewBox="0 0 16 16"><use href="#pc"/></svg><span class="t" style="transform:scaleX(0.8412)">View</span></span><span class="c c2"><span class="t" style="transform:scaleX(0.8800)">1</span></span><span class="c c3"><span class="t" style="transform:scaleX(0.8997)">ACPI\PNP0C...</span></span><span class="c c4"><span class="t" style="transform:scaleX(0.8800)">0</span></span><span class="c c5"><span class="t" style="transform:scaleX(0.8784)">SD Card boot Security Level</span></span><span class="c c6"><span class="t" style="transform:scaleX(0.8860)">Change, View, Hide</span></span><span class="c c7"><span class="t" style="transform:scaleX(0.8911)">Change, *View, Hide</span></span></div>
<div class="r"><span class="c c1"><svg class="ic" width="16" height="16" viewBox="0 0 16 16"><use href="#pc"/></svg><span class="t" style="transform:scaleX(0.8412)">View</span></span><span class="c c2"><span class="t" style="transform:scaleX(0.8800)">1</span></span><span class="c c3"><span class="t" style="transform:scaleX(0.8997)">ACPI\PNP0C...</span></span><span class="c c4"><span class="t" style="transform:scaleX(0.8800)">0</span></span><span class="c c5"><span class="t" style="transform:scaleX(0.8862)">PXE Internal IPV4/IPV6 NIC boot Security Level</span></span><span class="c c6"><span class="t" style="transform:scaleX(0.8860)">Change, View, Hide</span></span><span class="c c7"><span class="t" style="transform:scaleX(0.8911)">Change, *View, Hide</span></span></div>
<div class="r"><span class="c c1"><svg class="ic" width="16" height="16" viewBox="0 0 16 16"><use href="#pc"/></svg><span class="t" style="transform:scaleX(0.8412)">View</span></span><span class="c c2"><span class="t" style="transform:scaleX(0.8800)">1</span></span><span class="c c3"><span class="t" style="transform:scaleX(0.8997)">ACPI\PNP0C...</span></span><span class="c c4"><span class="t" style="transform:scaleX(0.8800)">0</span></span><span class="c c5"><span class="t" style="transform:scaleX(0.8795)">Wireless Button State Security Level</span></span><span class="c c6"><span class="t" style="transform:scaleX(0.8860)">Change, View, Hide</span></span><span class="c c7"><span class="t" style="transform:scaleX(0.8911)">Change, *View, Hide</span></span></div>
<div class="r"><span class="c c1"><svg class="ic" width="16" height="16" viewBox="0 0 16 16"><use href="#pc"/></svg><span class="t" style="transform:scaleX(0.8412)">View</span></span><span class="c c2"><span class="t" style="transform:scaleX(0.8800)">1</span></span><span class="c c3"><span class="t" style="transform:scaleX(0.8997)">ACPI\PNP0C...</span></span><span class="c c4"><span class="t" style="transform:scaleX(0.8800)">0</span></span><span class="c c5"><span class="t" style="transform:scaleX(0.8870)">Modem Device Security Level</span></span><span class="c c6"><span class="t" style="transform:scaleX(0.8860)">Change, View, Hide</span></span><span class="c c7"><span class="t" style="transform:scaleX(0.8911)">Change, *View, Hide</span></span></div>
<div class="r"><span class="c c1"><svg class="ic" width="16" height="16" viewBox="0 0 16 16"><use href="#pc"/></svg><span class="t" style="transform:scaleX(0.8412)">View</span></span><span class="c c2"><span class="t" style="transform:scaleX(0.8800)">1</span></span><span class="c c3"><span class="t" style="transform:scaleX(0.8997)">ACPI\PNP0C...</span></span><span class="c c4"><span class="t" style="transform:scaleX(0.8800)">0</span></span><span class="c c5"><span class="t" style="transform:scaleX(0.8656)">Finger Print reset Security Level</span></span><span class="c c6"><span class="t" style="transform:scaleX(0.8860)">Change, View, Hide</span></span><span class="c c7"><span class="t" style="transform:scaleX(0.8911)">Change, *View, Hide</span></span></div>
<div class="r"><span class="c c1"><svg class="ic" width="16" height="16" viewBox="0 0 16 16"><use href="#pc"/></svg><span class="t" style="transform:scaleX(0.8443)">Change</span></span><span class="c c2"><span class="t" style="transform:scaleX(0.8800)">1</span></span><span class="c c3"><span class="t" style="transform:scaleX(0.8997)">ACPI\PNP0C...</span></span><span class="c c4"><span class="t" style="transform:scaleX(0.8800)">0</span></span><span class="c c5"><span class="t" style="transform:scaleX(0.8770)">HP SpareKey Security Level</span></span><span class="c c6"><span class="t" style="transform:scaleX(0.8860)">Change, View, Hide</span></span><span class="c c7"><span class="t" style="transform:scaleX(0.8920)">*Change, View, Hide</span></span></div>
<div class="r"><span class="c c1"><svg class="ic" width="16" height="16" viewBox="0 0 16 16"><use href="#pc"/></svg><span class="t" style="transform:scaleX(0.8412)">View</span></span><span class="c c2"><span class="t" style="transform:scaleX(0.8800)">1</span></span><span class="c c3"><span class="t" style="transform:scaleX(0.8997)">ACPI\PNP0C...</span></span><span class="c c4"><span class="t" style="transform:scaleX(0.8800)">0</span></span><span class="c c5"><span class="t" style="transform:scaleX(0.8937)">Trusted Execution Technology (TXT) Security Level</span></span><span class="c c6"><span class="t" style="transform:scaleX(0.8860)">Change, View, Hide</span></span><span class="c c7"><span class="t" style="transform:scaleX(0.8911)">Change, *View, Hide</span></span></div>
<div class="r"><span class="c c1"><svg class="ic" width="16" height="16" viewBox="0 0 16 16"><use href="#pc"/></svg><span class="t" style="transform:scaleX(0.8412)">View</span></span><span class="c c2"><span class="t" style="transform:scaleX(0.8800)">1</span></span><span class="c c3"><span class="t" style="transform:scaleX(0.8997)">ACPI\PNP0C...</span></span><span class="c c4"><span class="t" style="transform:scaleX(0.8800)">0</span></span><span class="c c5"><span class="t" style="transform:scaleX(0.8825)">Display Diagnostic URL Security Level</span></span><span class="c c6"><span class="t" style="transform:scaleX(0.8860)">Change, View, Hide</span></span><span class="c c7"><span class="t" style="transform:scaleX(0.8911)">Change, *View, Hide</span></span></div>
<div class="r"><span class="c c1"><svg class="ic" width="16" height="16" viewBox="0 0 16 16"><use href="#pc"/></svg><span class="t" style="transform:scaleX(0.8412)">View</span></span><span class="c c2"><span class="t" style="transform:scaleX(0.8800)">1</span></span><span class="c c3"><span class="t" style="transform:scaleX(0.8997)">ACPI\PNP0C...</span></span><span class="c c4"><span class="t" style="transform:scaleX(0.8800)">0</span></span><span class="c c5"><span class="t" style="transform:scaleX(0.8618)">Smart Card Security Level</span></span><span class="c c6"><span class="t" style="transform:scaleX(0.8860)">Change, View, Hide</span></span><span class="c c7"><span class="t" style="transform:scaleX(0.8911)">Change, *View, Hide</span></span></div>
<div class="r"><span class="c c1"><svg class="ic" width="16" height="16" viewBox="0 0 16 16"><use href="#pc"/></svg><span class="t" style="transform:scaleX(0.8101)">Hide</span></span><span class="c c2"><span class="t" style="transform:scaleX(0.8800)">1</span></span><span class="c c3"><span class="t" style="transform:scaleX(0.8997)">ACPI\PNP0C...</span></span><span class="c c4"><span class="t" style="transform:scaleX(0.8800)">0</span></span><span class="c c5"><span class="t" style="transform:scaleX(0.8768)">USB Key Provisioning Support Security Level</span></span><span class="c c6"><span class="t" style="transform:scaleX(0.8860)">Change, View, Hide</span></span><span class="c c7"><span class="t" style="transform:scaleX(0.8839)">Change, View, *Hide</span></span></div>
<div class="r"><span class="c c1"><svg class="ic" width="16" height="16" viewBox="0 0 16 16"><use href="#pc"/></svg><span class="t" style="transform:scaleX(0.8412)">View</span></span><span class="c c2"><span class="t" style="transform:scaleX(0.8800)">1</span></span><span class="c c3"><span class="t" style="transform:scaleX(0.8997)">ACPI\PNP0C...</span></span><span class="c c4"><span class="t" style="transform:scaleX(0.8800)">0</span></span><span class="c c5"><span class="t" style="transform:scaleX(0.8668)">AMT Setup Prompt(Ctrl-P) Security Level</span></span><span class="c c6"><span class="t" style="transform:scaleX(0.8860)">Change, View, Hide</span></span><span class="c c7"><span class="t" style="transform:scaleX(0.8911)">Change, *View, Hide</span></span></div>
<div class="r"><span class="c c1"><svg class="ic" width="16" height="16" viewBox="0 0 16 16"><use href="#pc"/></svg><span class="t" style="transform:scaleX(0.8412)">View</span></span><span class="c c2"><span class="t" style="transform:scaleX(0.8800)">1</span></span><span class="c c3"><span class="t" style="transform:scaleX(0.8997)">ACPI\PNP0C...</span></span><span class="c c4"><span class="t" style="transform:scaleX(0.8800)">0</span></span><span class="c c5"><span class="t" style="transform:scaleX(0.8811)">Microphone Security Level</span></span><span class="c c6"><span class="t" style="transform:scaleX(0.8860)">Change, View, Hide</span></span><span class="c c7"><span class="t" style="transform:scaleX(0.8911)">Change, *View, Hide</span></span></div>
<div class="r"><span class="c c1"><svg class="ic" width="16" height="16" viewBox="0 0 16 16"><use href="#pc"/></svg><span class="t" style="transform:scaleX(0.8412)">View</span></span><span class="c c2"><span class="t" style="transform:scaleX(0.8800)">1</span></span><span class="c c3"><span class="t" style="transform:scaleX(0.8997)">ACPI\PNP0C...</span></span><span class="c c4"><span class="t" style="transform:scaleX(0.8800)">0</span></span><span class="c c5"><span class="t" style="transform:scaleX(0.8720)">Disk Sanitizer Security Level</span></span><span class="c c6"><span class="t" style="transform:scaleX(0.8860)">Change, View, Hide</span></span><span class="c c7"><span class="t" style="transform:scaleX(0.8911)">Change, *View, Hide</span></span></div>
<div class="r"><span class="c c1"><svg class="ic" width="16" height="16" viewBox="0 0 16 16"><use href="#pc"/></svg><span class="t" style="transform:scaleX(0.8412)">View</span></span><span class="c c2"><span class="t" style="transform:scaleX(0.8800)">1</span></span><span class="c c3"><span class="t" style="transform:scaleX(0.8997)">ACPI\PNP0C...</span></span><span class="c c4"><span class="t" style="transform:scaleX(0.8800)">0</span></span><span class="c c5"><span class="t" style="transform:scaleX(0.8826)">Boot Mode Security Level</span></span><span class="c c6"><span class="t" style="transform:scaleX(0.8860)">Change, View, Hide</span></span><span class="c c7"><span class="t" style="transform:scaleX(0.8911)">Change, *View, Hide</span></span></div>
<div class="r"><span class="c c1"><svg class="ic" width="16" height="16" viewBox="0 0 16 16"><use href="#pc"/></svg><span class="t" style="transform:scaleX(0.8443)">Change</span></span><span class="c c2"><span class="t" style="transform:scaleX(0.8800)">1</span></span><span class="c c3"><span class="t" style="transform:scaleX(0.8997)">ACPI\PNP0C...</span></span><span class="c c4"><span class="t" style="transform:scaleX(0.8800)">0</span></span><span class="c c5"><span class="t" style="transform:scaleX(0.8909)">NumLock on at boot Security Level</span></span><span class="c c6"><span class="t" style="transform:scaleX(0.8860)">Change, View, Hide</span></span><span class="c c7"><span class="t" style="transform:scaleX(0.8920)">*Change, View, Hide</span></span></div>
<div class="r"><span class="c c1"><svg class="ic" width="16" height="16" viewBox="0 0 16 16"><use href="#pc"/></svg></span><span class="c c2"><span class="t" style="transform:scaleX(0.8800)">0</span></span><span class="c c3"><span class="t" style="transform:scaleX(0.8997)">ACPI\PNP0C...</span></span><span class="c c4"><span class="t" style="transform:scaleX(0.8800)">1</span></span></div>
<div class="r"><span class="c c1"><svg class="ic" width="16" height="16" viewBox="0 0 16 16"><use href="#pc"/></svg><span class="t" style="transform:scaleX(0.8412)">View</span></span><span class="c c2"><span class="t" style="transform:scaleX(0.8800)">1</span></span><span class="c c3"><span class="t" style="transform:scaleX(0.8997)">ACPI\PNP0C...</span></span><span class="c c4"><span class="t" style="transform:scaleX(0.8800)">0</span></span><span class="c c5"><span class="t" style="transform:scaleX(0.8785)">Initiate Intel CIRA Security Level</span></span><span class="c c6"><span class="t" style="transform:scaleX(0.8860)">Change, View, Hide</span></span><span class="c c7"><span class="t" style="transform:scaleX(0.8911)">Change, *View, Hide</span></span></div>
<div class="r"><span class="c c1"><svg class="ic" width="16" height="16" viewBox="0 0 16 16"><use href="#pc"/></svg><span class="t" style="transform:scaleX(0.8412)">View</span></span><span class="c c2"><span class="t" style="transform:scaleX(0.8800)">1</span></span><span class="c c3"><span class="t" style="transform:scaleX(0.8997)">ACPI\PNP0C...</span></span><span class="c c4"><span class="t" style="transform:scaleX(0.8800)">0</span></span><span class="c c5"><span class="t" style="transform:scaleX(0.8797)">Intel (R) Anti-Theft Security Level</span></span><span class="c c6"><span class="t" style="transform:scaleX(0.8860)">Change, View, Hide</span></span><span class="c c7"><span class="t" style="transform:scaleX(0.8911)">Change, *View, Hide</span></span></div>
<div class="r"><span class="c c1"><svg class="ic" width="16" height="16" viewBox="0 0 16 16"><use href="#pc"/></svg><span class="t" style="transform:scaleX(0.8412)">View</span></span><span class="c c2"><span class="t" style="transform:scaleX(0.8800)">1</span></span><span class="c c3"><span class="t" style="transform:scaleX(0.8997)">ACPI\PNP0C...</span></span><span class="c c4"><span class="t" style="transform:scaleX(0.8800)">0</span></span><span class="c c5"><span class="t" style="transform:scaleX(0.8717)">Power Monitor Circuit Security Level</span></span><span class="c c6"><span class="t" style="transform:scaleX(0.8860)">Change, View, Hide</span></span><span class="c c7"><span class="t" style="transform:scaleX(0.8911)">Change, *View, Hide</span></span></div>
<div class="r"><span class="c c1"><svg class="ic" width="16" height="16" viewBox="0 0 16 16"><use href="#pc"/></svg><span class="t" style="transform:scaleX(0.8412)">View</span></span><span class="c c2"><span class="t" style="transform:scaleX(0.8800)">1</span></span><span class="c c3"><span class="t" style="transform:scaleX(0.8997)">ACPI\PNP0C...</span></span><span class="c c4"><span class="t" style="transform:scaleX(0.8800)">0</span></span><span class="c c5"><span class="t" style="transform:scaleX(0.8882)">Speakers and Headphones Security Level</span></span><span class="c c6"><span class="t" style="transform:scaleX(0.8860)">Change, View, Hide</span></span><span class="c c7"><span class="t" style="transform:scaleX(0.8911)">Change, *View, Hide</span></span></div>
<div class="r"><span class="c c1"><svg class="ic" width="16" height="16" viewBox="0 0 16 16"><use href="#pc"/></svg><span class="t" style="transform:scaleX(0.8412)">View</span></span><span class="c c2"><span class="t" style="transform:scaleX(0.8800)">1</span></span><span class="c c3"><span class="t" style="transform:scaleX(0.8997)">ACPI\PNP0C...</span></span><span class="c c4"><span class="t" style="transform:scaleX(0.8800)">0</span></span><span class="c c5"><span class="t" style="transform:scaleX(0.8901)">Audio Device Security Level</span></span><span class="c c6"><span class="t" style="transform:scaleX(0.8860)">Change, View, Hide</span></span><span class="c c7"><span class="t" style="transform:scaleX(0.8911)">Change, *View, Hide</span></span></div>
<div class="r"><span class="c c1"><svg class="ic" width="16" height="16" viewBox="0 0 16 16"><use href="#pc"/></svg><span class="t" style="transform:scaleX(0.8412)">View</span></span><span class="c c2"><span class="t" style="transform:scaleX(0.8800)">1</span></span><span class="c c3"><span class="t" style="transform:scaleX(0.8997)">ACPI\PNP0C...</span></span><span class="c c4"><span class="t" style="transform:scaleX(0.8800)">0</span></span><span class="c c5"><span class="t" style="transform:scaleX(0.8953)">eSATA Port Security Level</span></span><span class="c c6"><span class="t" style="transform:scaleX(0.8860)">Change, View, Hide</span></span><span class="c c7"><span class="t" style="transform:scaleX(0.8911)">Change, *View, Hide</span></span></div>
</div>
</div>
<div class="sb" style="left:239px;top:33px;width:17px;height:594px"></div><div class="sbtn" style="left:239px;top:33px"><svg width="17" height="17" style="position:absolute;left:-1px;top:-1px"><path d="M5.100 11.300L8.500 7.900L11.900 11.300" fill="none" stroke="#505050" stroke-width="1.350"/></svg></div><div class="sbtn" style="left:239px;top:610px"><svg width="17" height="17" style="position:absolute;left:-1px;top:-1px"><path d="M5.100 6.700L8.500 10.100L11.900 6.700" fill="none" stroke="#505050" stroke-width="1.350"/></svg></div><div class="thumb" style="left:239px;top:50px;width:17px;height:406px"></div><div class="gb" style="left:244px;top:248px;width:7px;height:2px"></div><div class="gb" style="left:244px;top:251px;width:7px;height:2px"></div><div class="gb" style="left:244px;top:254px;width:7px;height:2px"></div>
<div class="sb" style="left:10px;top:627px;height:17px;width:229px"></div><div class="sbtn" style="left:10px;top:627px"><svg width="17" height="17" style="position:absolute;left:-1px;top:-1px"><path d="M10.400 5.100L7 8.500L10.400 11.900" fill="none" stroke="#505050" stroke-width="1.350"/></svg></div><div class="sbtn" style="left:222px;top:627px"><svg width="17" height="17" style="position:absolute;left:-1px;top:-1px"><path d="M6.600 5.100L10 8.500L6.600 11.900" fill="none" stroke="#505050" stroke-width="1.350"/></svg></div><div class="thumb" style="left:27px;top:627px;height:17px;width:143px"></div><div class="gb" style="left:94px;top:632px;width:2px;height:7px"></div><div class="gb" style="left:97px;top:632px;width:2px;height:7px"></div><div class="gb" style="left:100px;top:632px;width:2px;height:7px"></div>
<div class="a" style="left:239px;top:627px;width:17px;height:17px;background:#f0f0f0"></div>
<div class="sb" style="left:1173px;top:57px;width:17px;height:570px"></div><div class="sbtn" style="left:1173px;top:57px"><svg width="17" height="17" style="position:absolute;left:-1px;top:-1px"><path d="M5.100 11.300L8.500 7.900L11.900 11.300" fill="none" stroke="#505050" stroke-width="1.350"/></svg></div><div class="sbtn" style="left:1173px;top:610px"><svg width="17" height="17" style="position:absolute;left:-1px;top:-1px"><path d="M5.100 6.700L8.500 10.100L11.900 6.700" fill="none" stroke="#505050" stroke-width="1.350"/></svg></div><div class="thumb" style="left:1173px;top:74px;width:17px;height:67px"></div><div class="gb" style="left:1178px;top:103px;width:7px;height:2px"></div><div class="gb" style="left:1178px;top:106px;width:7px;height:2px"></div><div class="gb" style="left:1178px;top:109px;width:7px;height:2px"></div>
<div class="sb" style="left:264px;top:627px;height:17px;width:909px"></div><div class="sbtn" style="left:264px;top:627px"><svg width="17" height="17" style="position:absolute;left:-1px;top:-1px"><path d="M10.400 5.100L7 8.500L10.400 11.900" fill="none" stroke="#505050" stroke-width="1.350"/></svg></div><div class="sbtn" style="left:1156px;top:627px"><svg width="17" height="17" style="position:absolute;left:-1px;top:-1px"><path d="M6.600 5.100L10 8.500L6.600 11.900" fill="none" stroke="#505050" stroke-width="1.350"/></svg></div><div class="thumb" style="left:281px;top:627px;height:17px;width:529px"></div><div class="gb" style="left:541px;top:632px;width:2px;height:7px"></div><div class="gb" style="left:544px;top:632px;width:2px;height:7px"></div><div class="gb" style="left:547px;top:632px;width:2px;height:7px"></div>
<div class="a" style="left:1173px;top:627px;width:17px;height:17px;background:#f0f0f0"><svg width="17" height="17"><path d="M12.700 7.600h1.400v1.800h-1.400zM12.700 10.600h1.400v1.800h-1.400zM9.700 10.600h1.400v1.800h-1.400zM12.700 13.600h1.400v1.800h-1.400zM9.700 13.600h1.400v1.800h-1.400zM6.700 13.600h1.400v1.800h-1.400z" fill="#9c9c9c"/></svg></div>
<div class="a" style="left:0;top:0;width:1200px;height:654px;border:1px solid #2b2326;pointer-events:none"></div>
</div></body></html>
